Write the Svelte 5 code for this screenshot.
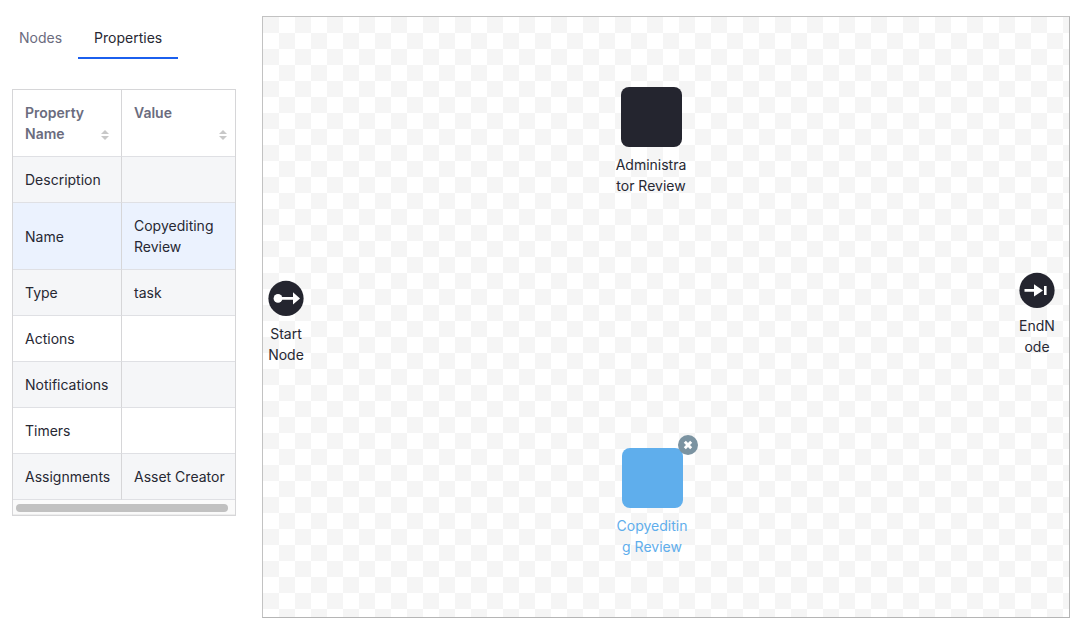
<script>
  const rows = [
    { name: 'Description', value: '' },
    { name: 'Name', value: 'Copyediting Review' },
    { name: 'Type', value: 'task' },
    { name: 'Actions', value: '' },
    { name: 'Notifications', value: '' },
    { name: 'Timers', value: '' },
    { name: 'Assignments', value: 'Asset Creator' }
  ];

  const nodes = [
    { kind: 'task', lines: ['Administra', 'tor Review'], x: 388, y: 70 },
    { kind: 'start', lines: ['Start', 'Node'], x: 23, y: 263 },
    { kind: 'end', lines: ['EndN', 'ode'], x: 774, y: 255 },
    { kind: 'task', lines: ['Copyeditin', 'g Review'], x: 389, y: 431, selected: true }
  ];

  let hovered = $state('Name');
</script>

{#snippet sortIcon()}
  <svg class="sort" width="8" height="10" viewBox="0 0 8 10" aria-hidden="true">
    <path d="M4 0 L8 4 H0 Z M0 6 H8 L4 10 Z" />
  </svg>
{/snippet}

<main class="designer">
  <aside class="panel">
    <nav class="tabs" aria-label="Panel">
      <button class="tab" type="button">Nodes</button>
      <button class="tab active" type="button" aria-current="true">Properties</button>
    </nav>

    <div class="table-box">
      <div class="viewport">
        <table>
          <colgroup><col class="names" /><col /></colgroup>
          <thead>
            <tr>
              <th scope="col"><button class="head" type="button"><span>Property Name</span>{@render sortIcon()}</button></th>
              <th scope="col"><button class="head" type="button"><span>Value</span>{@render sortIcon()}</button></th>
            </tr>
          </thead>
          <tbody>
            {#each rows as row}
              <tr class:hovered={hovered === row.name} onmouseenter={() => (hovered = row.name)}>
                <td>{row.name}</td>
                <td>{row.value}</td>
              </tr>
            {/each}
          </tbody>
        </table>
      </div>
      <div class="track"><div class="thumb"></div></div>
    </div>
  </aside>

  <section class="canvas">
    {#each nodes as node}
      <div class="node {node.kind}" class:selected={node.selected} style="left: {node.x}px; top: {node.y}px">
        {#if node.kind === 'task'}
          <div class="shape">
            {#if node.selected}
              <button class="close" type="button" aria-label="Delete node">
                <svg width="20" height="20" viewBox="0 0 20 20">
                  <path d="M6.8 6.8 L13.2 13.2 M13.2 6.8 L6.8 13.2" stroke="#fff" stroke-width="2.9" />
                </svg>
              </button>
            {/if}
          </div>
        {:else}
          <svg class="round" width="36" height="36" viewBox="0 0 36 36" aria-hidden="true">
            <circle cx="18" cy="18.4" r="17.6" fill="#24252f" />
            {#if node.kind === 'start'}
              <circle cx="10" cy="18.4" r="4.4" fill="#fff" />
              <path d="M12 17 H25 V12.2 L32 18.4 L25 24.6 V19.8 H12 Z" fill="#fff" />
            {:else}
              <path d="M5.5 17 H15 V12.2 L24 18.4 L15 24.6 V19.8 H5.5 Z M25 14 H27.6 V23 H25 Z" fill="#fff" />
            {/if}
          </svg>
        {/if}
        <div class="label">
          {#each node.lines as line}<span>{line}</span>{/each}
        </div>
      </div>
    {/each}
  </section>
</main>

<style>
  :global(body) {
    background: #fff;
  }
  .designer {
    box-sizing: border-box;
    display: grid;
    grid-template-columns: 224px minmax(0, 1fr);
    gap: 26px;
    min-height: 100vh;
    padding: 16px 13px 13px 12px;
    color: #272833;
    font: 14px/21px Inter, sans-serif;
  }
  button {
    padding: 0;
    border: 0;
    background: none;
    color: inherit;
    font: inherit;
    cursor: pointer;
  }
  .tabs {
    display: flex;
    margin: 0 0 30px -9px;
  }
  .tab {
    padding: 11px 16px 9px;
    border-bottom: 2px solid transparent;
    color: #6b6c7e;
  }
  .tab.active {
    border-color: #1b5fee;
    color: #272833;
  }
  .table-box {
    border: 1px solid #d6d6d8;
  }
  .viewport {
    overflow: hidden;
  }
  table {
    width: calc(100% + 4px);
    table-layout: fixed;
    border-spacing: 0;
  }
  .names {
    width: 109px;
  }
  th,
  td {
    box-sizing: border-box;
    height: 46px;
    padding: 12px;
    border-bottom: 1px solid #dfe0e4;
    text-align: left;
    vertical-align: middle;
  }
  th:first-child,
  td:first-child {
    border-right: 1px solid #d6d6d8;
  }
  td {
    white-space: nowrap;
  }
  td:last-child {
    white-space: normal;
  }
  th {
    color: #6b6c7e;
    font-weight: 600;
  }
  .head {
    display: flex;
    justify-content: space-between;
    width: 100%;
    height: 42px;
    text-align: left;
  }
  .head span {
    flex: 1;
  }
  .sort {
    align-self: flex-end;
    margin-bottom: 4px;
    fill: #c8c8c8;
  }
  tbody tr:nth-child(odd) {
    background: #f5f6f8;
  }
  tbody tr.hovered {
    background: #ebf2fe;
  }
  .track {
    padding: 4px 7px 2px 3px;
    border-bottom: 1px solid #ededed;
    background: #fafafa;
  }
  .thumb {
    height: 8px;
    border-radius: 4px;
    background: #c1c1c1;
  }
  .canvas {
    position: relative;
    border: 1px solid #b5b5b5;
    border-left-color: #c2c2c2;
    border-top-color: #c2c2c2;
    background: repeating-conic-gradient(#fff 0 25%, #f5f5f5 0 50%) 0 0 / 32px 32px;
    overflow: hidden;
  }
  .node {
    position: absolute;
    display: flex;
    flex-direction: column;
    align-items: center;
    gap: 7px;
    width: 80px;
    margin-left: -40px;
  }
  .shape {
    position: relative;
    width: 61px;
    height: 60px;
    border-radius: 8px;
    background: #24252f;
  }
  .selected .shape {
    background: #5faeec;
  }
  .round {
    display: block;
  }
  .label {
    display: flex;
    flex-direction: column;
    align-items: center;
  }
  .selected .label {
    color: #5faeec;
  }
  .close {
    position: absolute;
    top: -13px;
    right: -15px;
    width: 20px;
    height: 20px;
    border-radius: 50%;
    background: #7b93a1;
  }
  .close svg {
    display: block;
  }
</style>
